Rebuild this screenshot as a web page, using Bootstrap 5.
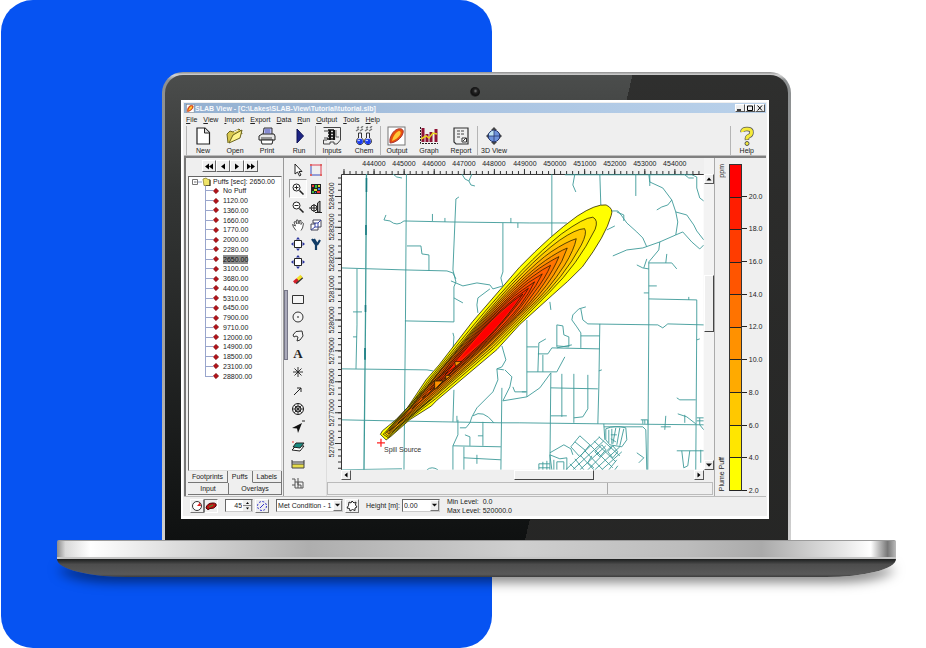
<!DOCTYPE html>
<html lang="en">
<head>
<meta charset="utf-8">
<meta name="viewport" content="width=device-width, initial-scale=1">
<title>SLAB View</title>
<link href="https://cdn.jsdelivr.net/npm/bootstrap@5.3.0/dist/css/bootstrap.min.css" rel="stylesheet">
<style>
:root{--face:#efefef;--edge:#8a8a8a;--ink:#222}
body{background:#fff;font-family:"Liberation Sans",Arial,sans-serif;color:var(--ink)}
.stage{min-height:100vh;padding-top:72px;padding-bottom:70px;overflow:hidden}
.backdrop{position:absolute;top:0;bottom:0;left:1px;width:53%;background:#0653f2;border-radius:32px}
.laptop{position:relative}
.lid{margin:0 14.6% 0 17.5%;padding:3px 3px 0;border-radius:21px 21px 0 0;background:linear-gradient(#8e8e8e,#d5d5d5 3px,#8c8f90 8px,#a3a3a3 60%,#d0d0d0)}
.bezel{border-radius:18px 18px 0 0;padding:0 19px 21px 16px;background:linear-gradient(103deg,transparent 64%,rgba(42,42,41,.85) 64%),linear-gradient(#4b4d4c,#343635 25%,#0f1111)}
.cam-row{height:25px}
.cam{width:10px;height:10px;border-radius:50%;background:radial-gradient(circle at 55% 40%,#777 0,#222 25%,#111 55%,#3a3a3a 75%,#222)}
.base-top{height:19px;margin:0 3.2% 0 6.2%;border-top:1px solid #9a9a9a;border-bottom:2px solid #c9c9c9;border-radius:2px 2px 0 0;background:linear-gradient(90deg,#8b8b8b,#d9d9d9 1%,#fff 4%,#ddd 14%,#aeaeae 30%,#cfcfcf 55%,#bcbcbc 75%,#aaa 84%,#e9e9e9 94%,#fff 97%,#777 99%,#bbb)}
.base-foot{height:18px;margin:0 3.2% 0 6.2%;border-radius:0 0 70px 70px/0 0 18px 18px;background:linear-gradient(#1c1e1e,#4d4d4d 30%,#595959 85%,#3c3c3c);box-shadow:0 7px 12px -2px rgba(0,0,0,.5)}
.screen{background:var(--face);border:2px solid #fff;border-bottom-width:3px;padding:1px;font-size:7px;line-height:9px}
.screen button,.screen input,.screen select{font:inherit;color:inherit;border-radius:0;padding:0;margin:0}
.titlebar{height:10px;background:linear-gradient(90deg,#94b0d0,#a9c3e1 45%,#b9d1ea);color:#f8fafd;font-weight:700;padding:0 1px 0 2px}
.win-btn{width:10px;height:8px;background:var(--face);border:1px solid;border-color:#fff #555 #555 #fff}
.menus{height:13px;padding-left:2px;gap:6px}
.menus a{color:var(--ink);text-decoration:none}
.toolbar{height:30px;padding:0 3px 0 2px;border-bottom:1px solid #bbb}
.tool{width:32px;border:0;background:none}
.tool svg{width:20px;height:20px}
.rule{width:1px;background:#b5b5b5;align-self:stretch}
.work{border-top:2px solid #808080}
.side{width:100px;border-left:2px solid #777;border-right:1px solid #999;padding:2px 1px 1px 2px}
.step{width:14px;height:12px;background:var(--face);border:1px solid;border-color:#fff #666 #666 #fff}
.screen .steps{padding-right:10px}
.tree{background:#fff;border:1px solid #666;border-right-color:#ddd;border-bottom-color:#ddd;padding-left:2px}
.puffs{height:195px;grid-auto-rows:1fr;margin:0 0 0 14px;padding:0}
.puffs li{list-style:none}
.puffs .stem{width:8px;align-self:stretch;border-left:1px solid #99a5cc;background:linear-gradient(#99a5cc,#99a5cc) 0 50%/100% 1px no-repeat}
.puffs li:last-child .stem{border-left:0;background:linear-gradient(#99a5cc,#99a5cc) 0 50%/100% 1px no-repeat,linear-gradient(#99a5cc,#99a5cc) 0 0/1px 50% no-repeat}
.puffs svg{width:6px;height:6px;margin-right:4px}
.puffs .picked{background:#8c8c8c;color:#111}
.tabkey{height:12px;background:var(--face);border:solid #777;border-width:0 1px 1px 0;flex:1 1 auto}
.tabkey.open{border-color:#efefef #777 #efefef #efefef}
.split{width:5px}
.split i{height:70px;width:4px;background:#aab;border:1px solid #778;margin-top:132px}
.palette{width:38px;grid-template-columns:18px 18px;grid-template-rows:repeat(18,1fr);padding:3px 0 4px;border-right:1px solid #ddd}
.palette button{border:0;background:none;display:flex;align-items:center;justify-content:center}
.palette button.held{border:1px solid;border-color:#999 #fff #fff #999;background:#f7f7f7}
.palette svg{width:14px;height:14px}
.screen .palette .letter{font-family:"Liberation Serif",serif;font-size:13px;font-weight:700}
.plot{min-width:0}
.chart{display:block;width:100%;height:auto}
.vbar{width:10px;padding-top:16px;background:#f3f3f3}
.vtrack{padding:91px 0 128px}
.htrack{padding:0 10px 0 14px}
.hthumb{margin-left:47.4%;width:23.6%}
.scroll-key{width:10px;height:10px;background:var(--face);border:1px solid;border-color:#fff #555 #555 #fff;line-height:1}
.thumb{background:var(--face);border:1px solid;border-color:#fff #444 #444 #fff}
.state{height:13px;border:1px solid #bbb;margin:2px 1px 1px 0}
.state span{width:73%;border-right:1px solid #aaa}
.legend{width:52px;border-left:1px solid #aaa;padding:6px 0 5px 2px}
.upright{writing-mode:vertical-rl;transform:rotate(180deg)}
.keys{margin-left:3px;border:1px solid #333;border-bottom:0;width:13px}
.keys span{border-bottom:1px solid #222}
.marks span{margin-bottom:-4px;margin-top:4px}
.marks span::before{content:"";width:5px;height:1px;background:#222;margin:0 2px 4px 0}
.footbar{height:19px;border-top:1px solid #bbb;padding-left:6px}
.footbar .gap-l{margin-left:7px}
.footbar .gap-s{margin-left:2px}
.mini{width:14px;height:14px;background:var(--face);border:1px solid!important;border-color:#fff #777 #777 #fff!important}
.mini.held{border-color:#777 #fff #fff #777!important}
.mini svg{width:12px;height:12px;display:block}
.field{height:13px;background:#fff;border:1px solid;border-color:#666 #ccc #ccc #666}
.screen .field select,.screen .field input{appearance:none;border:0;background:none;outline:0;padding:0 1px;min-width:0}
.drop{width:9px;background:var(--face);border:1px solid;border-color:#fff #777 #777 #fff;pointer-events:none;margin-left:-9px}
.w-num{width:28px}.w-met{width:67px}.w-hgt{width:38px}
</style>
</head>
<body>
<svg width="0" height="0" class="position-absolute" aria-hidden="true">
<symbol id="flame" viewBox="0 0 20 20"><rect x="1" y="1" width="17" height="18" fill="#fff" stroke="#777"/><path d="M3 16C2 12 6 4 11 3C15 2 17 4 16 7C15 12 8 17 3 17Z" fill="#e8500c" stroke="#a33"/><path d="M5 15C6 10 9 6 12 5C14 5 14 7 13 9C11 12 8 14 5 15Z" fill="#ffc93a"/></symbol>
<symbol id="tri" viewBox="0 0 8 8"><path d="M1 2.500H7L4 5.800Z" fill="#111"/></symbol>
<symbol id="gem" viewBox="0 0 6 6"><path d="M3 .3L5.700 3L3 5.700L.3 3Z" fill="#b3131b" stroke="#600" stroke-width=".5"/></symbol>
</svg>
<main class="stage position-relative">
<div class="backdrop"></div>
<div class="laptop">
<div class="lid"><div class="bezel">
<div class="cam-row d-flex justify-content-center align-items-center"><div class="cam mt-2"></div></div>
<section class="screen">
<header class="titlebar d-flex align-items-center">
<svg width="9" height="9"><use href="#flame"/></svg><span class="me-auto text-nowrap">SLAB View - [C:\Lakes\SLAB-View\Tutorial\tutorial.slb]</span>
<button class="win-btn d-flex" aria-label="Minimize"><svg width="8" height="6"><path d="M1 5H5" stroke="#000" stroke-width="1.500"/></svg></button>
<button class="win-btn d-flex" aria-label="Restore"><svg width="8" height="6"><path d="M1.500 1H6.500V5.500H1.500Z" fill="none" stroke="#000"/></svg></button>
<button class="win-btn d-flex" aria-label="Close"><svg width="8" height="6"><path d="M1.500 .5L6 5.500M6 .5L1.500 5.500" stroke="#000"/></svg></button>
</header>
<nav class="menus d-flex align-items-center">
<a href="#"><u>F</u>ile</a><a href="#"><u>V</u>iew</a><a href="#"><u>I</u>mport</a><a href="#"><u>E</u>xport</a><a href="#"><u>D</u>ata</a><a href="#"><u>R</u>un</a><a href="#"><u>O</u>utput</a><a href="#"><u>T</u>ools</a><a href="#"><u>H</u>elp</a>
</nav>
<div class="toolbar d-flex">
<span class="rule"></span>
<button class="tool"><svg viewBox="0 0 20 20"><path d="M4 2H12L16.500 6.500V18H4Z" fill="#fff" stroke="#222" stroke-width="1.200"/><path d="M11.500 2V7H16.500" fill="#ddd" stroke="#222"/></svg><br>New</button>
<button class="tool"><svg viewBox="0 0 20 20"><path d="M3 17L2 8L5 5L8 6L14 3L16 5L17 8" fill="#d9c94e" stroke="#6c6420"/><path d="M4 17L8 9L17 4L15 12Z" fill="#fdf48c" stroke="#6c6420"/><path d="M9 6L13 4" stroke="#fff"/></svg><br>Open</button>
<button class="tool"><svg viewBox="0 0 20 20"><path d="M6 9L7 2H15L15 9" fill="#b9bdf2" stroke="#333"/><path d="M8 4H13M8 6H13" stroke="#5258b0"/><path d="M2 10L5 8H17L18 10V14H2Z" fill="#e7e7e7" stroke="#222"/><path d="M4 14H16L15 18H5Z" fill="#fff" stroke="#222"/><path d="M4 12H15" stroke="#444"/></svg><br>Print</button>
<button class="tool"><svg viewBox="0 0 20 20"><path d="M8 3L14.500 10L8 17Z" fill="#1d2485" stroke="#0c1155"/></svg><br>Run</button>
<span class="rule"></span>
<button class="tool"><svg viewBox="0 0 20 20"><path d="M1.500 1.500H18.500V14L15 18H12V16H8V18H1.500V14H5" fill="#eee" stroke="#444"/><path d="M2 5H8M2 12H6" stroke="#444"/><path d="M6 4H12M6 7H11M6 10H11M5 13H11" stroke="#111" stroke-width="1.600"/><path d="M8 4V14M12 4V14" stroke="#111" stroke-width="2.200"/><path d="M14 4V11H17" fill="none" stroke="#666"/></svg><br>Inputs</button>
<button class="tool"><svg viewBox="0 0 20 20"><g fill="none" stroke="#777"><path d="M3 2L5 1M7 2L9 0M2 5L5 3M6 5L9 3M12 2L14 1M16 2L18 0M11 5L14 3M15 5L18 3" stroke-width="1.400"/></g><g fill="#eef" stroke="#333"><path d="M4.500 7V12A3.500 3.500 0 1 0 7.500 12V7ZM12.500 7V12A3.500 3.500 0 1 0 15.500 12V7Z"/></g><circle cx="6" cy="15.500" r="2.800" fill="#1b3cf0"/><circle cx="14" cy="15.500" r="2.800" fill="#1b3cf0"/><circle cx="5" cy="14.500" r=".8" fill="#fff"/><circle cx="13" cy="14.500" r=".8" fill="#fff"/></svg><br>Chem</button>
<span class="rule"></span>
<button class="tool"><svg><use href="#flame"/></svg><br>Output</button>
<button class="tool"><svg viewBox="0 0 20 20"><path d="M1.500 1V17.500H19" fill="none" stroke="#222" stroke-dasharray="2 1"/><path d="M4 2V16M8 8V16M12 6V16M17 3V16" stroke="#8f1235" stroke-width="3"/><path d="M2 13L7 10L10 12L14 7L18 8" fill="none" stroke="#e8d51c" stroke-width="1.500"/></svg><br>Graph</button>
<button class="tool"><svg viewBox="0 0 20 20"><path d="M3 2H17V18H5L3 16Z" fill="#eee" stroke="#333" stroke-width="1.200"/><path d="M6 5H14M6 8H13M6 11H10" stroke="#444" stroke-dasharray="3 1"/><path d="M11 12H15.500V16H11ZM12 15L15 12" fill="#fff" stroke="#333"/></svg><br>Report</button>
<span class="rule"></span>
<button class="tool"><svg viewBox="0 0 20 20"><path d="M10 1L13 4H7ZM10 19L13 16H7ZM2 10L5 7V13ZM18 10L15 7V13Z" fill="#444"/><circle cx="10" cy="10" r="5.800" fill="#6f93dc" stroke="#26386e"/><path d="M5 8Q7 4.500 10 4.500V10H5Z" fill="#bfe3f2"/><path d="M10 4V16M4 10H16" stroke="#26386e" stroke-width=".8"/></svg><br><span class="text-nowrap">3D View</span></button>
<span class="rule ms-auto"></span>
<button class="tool"><svg viewBox="0 0 20 20"><path d="M5.500 6Q5 3 10 3T14.500 6.500Q14.500 9 12 10T10 14" fill="none" stroke="#555" stroke-width="4.500"/><path d="M5.500 6Q5 3 10 3T14.500 6.500Q14.500 9 12 10T10 13.500" fill="none" stroke="#f5ea3a" stroke-width="3"/><circle cx="10" cy="17.500" r="2" fill="#f5ea3a" stroke="#555"/></svg><br>Help</button>
</div>
<div class="work d-flex">
<aside class="side d-flex flex-column">
<div class="steps d-flex justify-content-center mb-1">
<button class="step d-flex align-items-center justify-content-center" aria-label="First"><svg width="10" height="7"><path d="M5 .5V6.500L1 3.500ZM9 .5V6.500L5 3.500Z"/></svg></button>
<button class="step d-flex align-items-center justify-content-center" aria-label="Previous"><svg width="10" height="7"><path d="M7 .5V6.500L3 3.500Z"/></svg></button>
<button class="step d-flex align-items-center justify-content-center" aria-label="Next"><svg width="10" height="7"><path d="M3 .5V6.500L7 3.500Z"/></svg></button>
<button class="step d-flex align-items-center justify-content-center" aria-label="Last"><svg width="10" height="7"><path d="M1 .5V6.500L5 3.500ZM5 .5V6.500L9 3.500Z"/></svg></button>
</div>
<div class="tree flex-grow-1">
<div class="d-flex align-items-center text-nowrap"><svg width="22" height="9" class="flex-shrink-0"><path d="M1.500 2.500H6.500V7.500H1.500ZM3 5H5.500" fill="#fff" stroke="#777"/><path d="M7 5H11" stroke="#99a5cc"/><path d="M12 2L15 1L17 2.500H19V8.500H13Z" fill="#efe469" stroke="#8d8430" stroke-width=".8"/><path d="M19 3V9H15" stroke="#222" fill="none"/></svg>Puffs [sec]: 2650.00</div>
<ul class="puffs d-grid">
<li class="d-flex align-items-center"><span class="stem"></span><svg><use href="#gem"/></svg>No Puff</li>
<li class="d-flex align-items-center"><span class="stem"></span><svg><use href="#gem"/></svg>1120.00</li>
<li class="d-flex align-items-center"><span class="stem"></span><svg><use href="#gem"/></svg>1360.00</li>
<li class="d-flex align-items-center"><span class="stem"></span><svg><use href="#gem"/></svg>1660.00</li>
<li class="d-flex align-items-center"><span class="stem"></span><svg><use href="#gem"/></svg>1770.00</li>
<li class="d-flex align-items-center"><span class="stem"></span><svg><use href="#gem"/></svg>2000.00</li>
<li class="d-flex align-items-center"><span class="stem"></span><svg><use href="#gem"/></svg>2280.00</li>
<li class="d-flex align-items-center"><span class="stem"></span><svg><use href="#gem"/></svg><span class="picked">2650.00</span></li>
<li class="d-flex align-items-center"><span class="stem"></span><svg><use href="#gem"/></svg>3100.00</li>
<li class="d-flex align-items-center"><span class="stem"></span><svg><use href="#gem"/></svg>3680.00</li>
<li class="d-flex align-items-center"><span class="stem"></span><svg><use href="#gem"/></svg>4400.00</li>
<li class="d-flex align-items-center"><span class="stem"></span><svg><use href="#gem"/></svg>5310.00</li>
<li class="d-flex align-items-center"><span class="stem"></span><svg><use href="#gem"/></svg>6450.00</li>
<li class="d-flex align-items-center"><span class="stem"></span><svg><use href="#gem"/></svg>7900.00</li>
<li class="d-flex align-items-center"><span class="stem"></span><svg><use href="#gem"/></svg>9710.00</li>
<li class="d-flex align-items-center"><span class="stem"></span><svg><use href="#gem"/></svg>12000.00</li>
<li class="d-flex align-items-center"><span class="stem"></span><svg><use href="#gem"/></svg>14900.00</li>
<li class="d-flex align-items-center"><span class="stem"></span><svg><use href="#gem"/></svg>18500.00</li>
<li class="d-flex align-items-center"><span class="stem"></span><svg><use href="#gem"/></svg>23100.00</li>
<li class="d-flex align-items-center"><span class="stem"></span><svg><use href="#gem"/></svg>28800.00</li>
</ul>
</div>
<div class="d-flex"><button class="tabkey">Footprints</button><button class="tabkey open">Puffs</button><button class="tabkey">Labels</button></div>
<div class="d-flex"><button class="tabkey">Input</button><button class="tabkey">Overlays</button></div>
</aside>
<div class="split"><i class="d-block"></i></div>
<div class="palette d-grid">
<button aria-label="Select"><svg viewBox="0 0 14 14"><path d="M4 1V11L6.500 9L8.500 13L10 12L8 8.500H11Z" fill="#fff" stroke="#222"/></svg></button>
<button aria-label="Area"><svg viewBox="0 0 14 14"><path d="M2 2H12V12" fill="none" stroke="#e23a4c"/><path d="M2 2V12H12" fill="none" stroke="#3a4fc0"/><path d="M1 1h2v2h-2zM11 1h2v2h-2zM1 11h2v2h-2zM11 11h2v2h-2z" fill="#d66"/></svg></button>
<button class="held" aria-label="Zoom in"><svg viewBox="0 0 14 14"><circle cx="5.500" cy="5.500" r="3.500" fill="#fff" stroke="#222"/><path d="M3.500 5.500H7.500M5.500 3.500V7.500" stroke="#222"/><path d="M8.500 8.500L12.500 12.500" stroke="#222" stroke-width="1.600"/></svg></button>
<button aria-label="Colors"><svg viewBox="0 0 14 14"><path d="M2 2H12V12H2Z" fill="#222"/><path d="M3 3h2v2h-2zM8 9h3v2h-3z" fill="#e33"/><path d="M6 3h2v3h-2zM3 9h2v2h-2z" fill="#3b4"/><path d="M9 3h2v2h-2zM5 7h3v2h-3z" fill="#dd3"/><path d="M9 6h2v2h-2zM6 10h1v1h-1z" fill="#37e"/></svg></button>
<button aria-label="Zoom out"><svg viewBox="0 0 14 14"><circle cx="5.500" cy="5.500" r="3.500" fill="#fff" stroke="#222"/><path d="M3.500 5.500H7.500" stroke="#222"/><path d="M8.500 8.500L12.500 12.500" stroke="#222" stroke-width="1.600"/></svg></button>
<button aria-label="Building"><svg viewBox="0 0 14 14"><path d="M8.500 3L11 1V12H8.500Z" fill="#aaa" stroke="#222"/><path d="M6 12.500H13" stroke="#222"/><circle cx="5" cy="8" r="3" fill="none" stroke="#222"/><path d="M0 8H9M5 4V12" stroke="#222"/></svg></button>
<button aria-label="Pan"><svg viewBox="0 0 14 14"><path d="M5 12.500L2.500 9L1.500 6.500L4.500 8L3 4L4.500 3.500L6 6L5.500 2H7L8 6L8.500 2.500H10L10 6.500L11.500 4.500L12.500 5.500L11.500 10L10 12.500" fill="#fff" stroke="#444" stroke-width=".9"/></svg></button>
<button aria-label="Extent"><svg viewBox="0 0 14 14"><path d="M4 2H12V9H9V12H2V6H6V5H4Z" fill="#fff" stroke="#445"/><path d="M6 5H9V9H6ZM2 12L6 9M9 5L12 2" fill="none" stroke="#3946a5"/></svg></button>
<button aria-label="Fit"><svg viewBox="0 0 14 14"><path d="M3.500 3.500H10.500V10.500H3.500Z" fill="#fff" stroke="#222"/><path d="M7 0L9 2.500H5ZM7 14L9 11.500H5ZM0 7L2.500 5V9ZM14 7L11.500 5V9Z" fill="#26309c"/></svg></button>
<button aria-label="Wind"><svg viewBox="0 0 14 14"><path d="M3 2L7 8V13M5 2L8 7M8 8L11 3" stroke="#123c66" stroke-width="2.200" fill="none"/></svg></button>
<button aria-label="Fit layer"><svg viewBox="0 0 14 14"><path d="M3.500 3.500H10.500V10.500H3.500Z" fill="#fff" stroke="#222"/><path d="M7 0L9 2.500H5ZM7 14L9 11.500H5ZM0 7L2.500 5V9ZM14 7L11.500 5V9Z" fill="#26309c"/></svg></button><span></span>
<button aria-label="Highlight"><svg viewBox="0 0 14 14"><path d="M4.500 10L11 4" stroke="#333" stroke-width="3.500"/><path d="M6.500 6.500L10.500 3" stroke="#f3e02a" stroke-width="3"/><path d="M3 9.500L6.500 6.500" stroke="#d4202a" stroke-width="3"/></svg></button><span></span>
<button aria-label="Rectangle"><svg viewBox="0 0 14 14"><path d="M1.500 3.500H12.500V11.500H1.500Z" fill="#f5f5f5" stroke="#333"/></svg></button><span></span>
<button aria-label="Circle"><svg viewBox="0 0 14 14"><circle cx="7" cy="7" r="5" fill="#f5f5f5" stroke="#333"/><circle cx="7" cy="7" r=".8"/></svg></button><span></span>
<button aria-label="Polygon"><svg viewBox="0 0 14 14"><path d="M2 6L5 2.500L11 2L12 7L9 11L6 12L7 8L5 7L3 8Z" fill="#f5f5f5" stroke="#333"/></svg></button><span></span>
<button class="letter" aria-label="Text">A</button><span></span>
<button aria-label="Marker"><svg viewBox="0 0 14 14"><path d="M7 2V12M2 7H12M3.500 3.500L10.500 10.500M10.500 3.500L3.500 10.500" stroke="#222" stroke-width=".9"/></svg></button><span></span>
<button aria-label="Arrow"><svg viewBox="0 0 14 14"><path d="M3 11L10 4M6 4H10V8" stroke="#222" fill="none"/></svg></button><span></span>
<button aria-label="Polar grid"><svg viewBox="0 0 14 14"><circle cx="7" cy="7" r="5.500" fill="none" stroke="#222"/><circle cx="7" cy="7" r="3" fill="none" stroke="#222"/><path d="M7 1V13M1 7H13M3 3L11 11M11 3L3 11" stroke="#222" stroke-width=".8"/></svg></button><span></span>
<button aria-label="North"><svg viewBox="0 0 14 14"><path d="M11 3L7 13L6 8.500L1 8Z" fill="#111"/><path d="M11 1H14" stroke="#222"/></svg></button><span></span>
<button aria-label="Layers"><svg viewBox="0 0 14 14"><path d="M1 11L5 7H13L9 12Z" fill="#fff" stroke="#222"/><path d="M2 8L5 4H13L9 9Z" fill="#1b8a80" stroke="#222"/><path d="M1 3H3" stroke="#e33"/></svg></button><span></span>
<button aria-label="Scale"><svg viewBox="0 0 14 14"><path d="M1 3V7M1 5H13M13 3V7" stroke="#333"/><path d="M1 7H13V11H1Z" fill="#e6dc4a" stroke="#444"/></svg></button><span></span>
<button aria-label="Coordinates"><svg viewBox="0 0 14 14"><path d="M1 3H4V12M4 6H12V12H4M7 2V9H10V12M7 6V12M1 9H4" stroke="#555" fill="none"/></svg></button><span></span>
</div>
<div class="plot flex-grow-1 d-flex flex-column">
<div class="d-flex">
<svg class="chart" viewBox="327 158 377 312" role="img" aria-label="Plume map">
<defs><clipPath id="mapclip"><path d="M341 174H704V470H341Z"/></clipPath></defs>
<path d="M341 174H704V470H341Z" fill="#fff"/>
<g stroke="#333" fill="none">
<path d="M343.500 172.500H704" stroke-width="3" stroke-dasharray="1 5.020"/><path d="M343.500 171.500H704" stroke-width="5" stroke-dasharray="1 29.100"/>
<path d="M339.500 177.500V470" stroke-width="3" stroke-dasharray="1 5.180"/><path d="M338 196V470" stroke-width="6" stroke-dasharray="1 29.900"/>
<path d="M341.500 470V174.500H704"/></g>
<g font-size="7" fill="#222" text-anchor="middle"><text x="374" y="166">444000</text><text x="404" y="166">445000</text><text x="434" y="166">446000</text><text x="464" y="166">447000</text><text x="494" y="166">448000</text><text x="525" y="166">449000</text><text x="555" y="166">450000</text><text x="585" y="166">451000</text><text x="615" y="166">452000</text><text x="645" y="166">453000</text><text x="675" y="166">454000</text>
<text transform="translate(334 196) rotate(-90)">5284000</text><text transform="translate(334 227) rotate(-90)">5283000</text><text transform="translate(334 258) rotate(-90)">5282000</text><text transform="translate(334 289) rotate(-90)">5281000</text><text transform="translate(334 320) rotate(-90)">5280000</text><text transform="translate(334 351) rotate(-90)">5279000</text><text transform="translate(334 382) rotate(-90)">5278000</text><text transform="translate(334 413) rotate(-90)">5277000</text><text transform="translate(334 444) rotate(-90)">5276000</text></g>
<g clip-path="url(#mapclip)">
<g fill="none" stroke="#3d9a98" stroke-width=".9" stroke-linejoin="round">
<path d="M366.500 174L365.500 320L364 470" stroke-width="1.300"/><path d="M366.500 178V192M366 225V235M365.500 305V312M365 348V360" stroke="#177a80" stroke-width="1.600"/>
<path d="M406.500 174L405.500 320L404 470M393 174Q396 178 402 178M462 174L465 179L469 181L471 185L475 186M472 174L469 181M459 197L456 199L455 222L453 270L456 282L454 287V322L405 321"/>
<path d="M386 215L384 220L390 221Q397 227 404 221L450 222L530 223H567M432.500 214V221M445 218V222M511 218V223M518 223V228M407 246H421L422 254L429 255V271"/>
<path d="M342 268L405 270L447 271L453 273L456 279M451 281L463 286L477 283L490 285L493 289L503 286M503 223V272L501 278L503 286M490 289L478 298L477 305L478 313M454 298L463 303M357 269V325L356 369M353 312H362M353 337H357M342 369L427 370L433 371"/>
<path d="M342 420L390 421L443 422L502 423L520 423L600 424L704 425M453 333L454 337L453 352M454 390L453 422M457 416V422M502 346L506 360L502 367L497 369L498 380L493 392L477 408L472 417L470 423L466 428L460 428M473 416Q483 409 494 423"/>
<path d="M497 369L504 370M505 370L512 377L510 387L503 401L527 397M502 388L501 470M458 420V435L453 446V470M453 446L501 447M483 422V446M464 447V470M464 458L501 460M477 455V464M465 435L470 437V446M478 436H483M427 470Q432 466 438 470M527 320V397M513 387L515 392H526M342 470L402 469M527 392H522"/>
<path d="M552 174V236M600 174L601 205M575 174L573 185L576 192M636 174V196M649 174L650 182L663 188L672 200L676 212L678 222L676 235L660 242L643 248L627 250L613 256M650 175V186M565 174.800H692L697 177L697 188L700 198L704 201M684 174L689 178H694M672 200L668 205L662 207L657 210"/>
<path d="M676 212L687 215L694 225L697 231L704 240M676 235L683 232L692 242L700 249L704 245M612 211H618L622 216L627 223L637 232L643 238L647 247M617 212L624 215V221M615 226L607 230M660 242L659 250L649 262V325L648 470M649 263L672 263L677 269M666 263L667 254M637 265L643 268L649 269M644 268L647 259M649 286H657M644 293H649M649 299L697 300V325L696 470M689 297V300"/>
<path d="M586 307L579 309L573 315L572 320L577 327L581 333V348M581 309L583 320L588 324L658 325L663 328L668 324L704 325M550 302L551 310M581 336H600M600 324L599 387L598 424M527 347H538M546 339L539 343L538 372M557 347V325L563 326L564 335L569 337V347L557 346M538 354H548L552 348L600 349M527 372H557L558 370L565 357M543 355V372M572 345L557 348"/>
<path d="M527 397L540 388L551 373L550 470M551 388L598 389M562 374V417M551 416H567M574 374V423M588 375V409L583 417L574 418M604 424L605 440M604 427H643L646 430L647 470M677 398L680 400L696 400M666 416L665 430M661 427H671M678 414L687 417L696 424M685 415V423M677 451H704M682 451L684 468L688 466L690 451M701 450V463M637 453L644 458L639 463M697 340L700 339M599 371L602 370M641 420H648V424M643 420V424M645 420V424M697 418H704M697 421H704M700 418V425L704 430"/>
<path d="M550 453L564 445L571 449L573 455M552 470L550 455L560 459L567 458V470M554 470V460M557 470V462H564V470M539 464H550M539 468H550M539 464V470M543 462V470M547 461V470M571 447L580 436L590 445L580 457L571 447M575 442L586 451M566 470L600 437M573 470L604 441M580 470L606 446M588 470L612 446M595 470L620 447M602 470L622 452M609 470L617 460M585 451L603 470M590 445L613 468M594 441L616 462M599 437L620 456M575 459L584 470M570 464L576 470M580 455L594 470M606 429Q615 425 626 428L627 440L622 447L610 445L606 440ZM609 430V443M612 429V444M616 428L613 444M620 428L617 445M624 429L620 446M611 435H617M611 439L616 442M602 445L606 450L600 457L595 452ZM613 446L618 452L613 458L608 452ZM592 456L588 463L594 468M618 466L615 470"/>
</g>
<g transform="translate(384 438) rotate(-46)" stroke="#1f1a00" stroke-width=".7" stroke-linejoin="round">
<path fill="#ff0" d="M0 -5L4 -6Q22 -3 38 -4L71 -10L91 -11L145 -17L217 -21Q262 -21 294 -15Q316 -10 322 -2Q325 6 318 9Q300 19 261 24Q240 24 220 22L176 19L142 20L64 12L56 12L31 6L6 4L0 3Z"/>
<path fill="#ffe600" d="M2 -3L38 -3L71 -8L145 -14Q225 -20 270 -14Q298 -9 304 -3Q306 3 297 7Q260 19 220 18L142 17L64 10L31 5L3 3Z"/>
<path fill="#ffc800" d="M4 -2L38 -2L75 -7L145 -12Q225 -18 264 -11Q284 -7 290 -1Q289 4 276 8Q240 18 200 16L142 15L64 8L31 4L4 2Z"/>
<path fill="#ffaa00" d="M6 -2L40 -2L80 -6L145 -11Q220 -15 250 -9Q268 -5 277 0Q268 6 250 10Q220 16 190 14L142 13L64 7L31 3L6 1Z"/>
<path fill="#ff9100" d="M8 -1L45 -2L85 -6L145 -10Q210 -13 240 -7Q255 -4 264 0Q252 6 235 9Q210 14 180 12L142 12L70 6L31 2Z"/>
<path fill="#ff7300" d="M20 0L50 -2L90 -6L145 -9Q205 -11 230 -6Q244 -3 252 0Q240 5 222 8Q200 12 180 11L142 10L75 5Z"/>
<path fill="#ff5f00" d="M40 0L95 -5L145 -8Q198 -9 220 -5Q232 -3 240 0Q228 5 210 7Q190 11 170 10L142 9L80 4Z"/>
<path fill="#ff5000" d="M55 0L98 -4L145 -7Q190 -8 212 -4L228 0Q216 4 200 6Q180 10 142 8L85 4Z"/>
<path fill="#ff3c00" d="M66 0L100 -4L145 -6Q185 -7 203 -3L217 0Q205 4 190 6Q170 8 142 7L90 3Z"/>
<path fill="#ff2d00" d="M76 0L104 -3L145 -5Q180 -6 208 0Q190 5 142 6L95 3Z"/>
<path fill="#ff1e00" d="M88 0L108 -2L145 -4Q175 -5 200 0Q175 5 142 5L100 2Z"/>
<path fill="#f00" stroke="none" d="M108 0L145 -3Q170 -4 193 0Q170 4 142 4Z"/>
<path fill="none" d="M6 0L60 1M10 -3L60 -5M10 2L60 7M60 2L92 0M70 -4L100 -1M72 4L105 2"/>
<path fill="#ff9100" d="M76 -3L82 3L70 3ZM88 1L91 5L85 4ZM104 -2L109 3L101 2Z"/>
</g>
<path d="M377 443H385M381 439V447" stroke="#f22" stroke-width="1.300"/><text x="384" y="452" font-size="7" fill="#333">Spill Source</text>
</g>
</svg>
<div class="vbar d-flex flex-column flex-shrink-0"><button class="scroll-key d-flex" aria-label="Scroll up"><svg width="8" height="8"><path d="M1.500 5.500H6.500L4 2.500Z"/></svg></button><div class="vtrack flex-grow-1 d-flex flex-column"><i class="thumb flex-grow-1"></i></div><button class="scroll-key d-flex" aria-label="Scroll down"><svg width="8" height="8"><use href="#tri"/></svg></button></div>
</div>
<div class="htrack d-flex"><button class="scroll-key d-flex" aria-label="Scroll left"><svg width="8" height="8"><path d="M5.500 1.500V6.500L2.500 4Z"/></svg></button><div class="flex-grow-1 d-flex"><i class="thumb hthumb"></i></div><button class="scroll-key d-flex" aria-label="Scroll right"><svg width="8" height="8"><path d="M2.500 1.500V6.500L5.500 4Z"/></svg></button></div>
<div class="state d-flex"><span></span></div>
</div>
<aside class="legend d-flex">
<div class="d-flex flex-column justify-content-between"><span class="upright">ppm</span><span class="upright text-nowrap">Plume Puff</span></div>
<div class="keys d-flex flex-column flex-shrink-0">
<span class="flex-fill" style="background:#f00"></span><span class="flex-fill" style="background:#ff1e00"></span><span class="flex-fill" style="background:#ff3c00"></span><span class="flex-fill" style="background:#ff5500"></span><span class="flex-fill" style="background:#ff7300"></span><span class="flex-fill" style="background:#ff9100"></span><span class="flex-fill" style="background:#ffaa00"></span><span class="flex-fill" style="background:#ffc800"></span><span class="flex-fill" style="background:#ffe600"></span><span class="flex-fill" style="background:#ff0"></span>
</div>
<div class="marks d-flex flex-column">
<span class="flex-fill d-flex align-items-end">20.0</span><span class="flex-fill d-flex align-items-end">18.0</span><span class="flex-fill d-flex align-items-end">16.0</span><span class="flex-fill d-flex align-items-end">14.0</span><span class="flex-fill d-flex align-items-end">12.0</span><span class="flex-fill d-flex align-items-end">10.0</span><span class="flex-fill d-flex align-items-end">8.0</span><span class="flex-fill d-flex align-items-end">6.0</span><span class="flex-fill d-flex align-items-end">4.0</span><span class="flex-fill d-flex align-items-end">2.0</span>
</div>
</aside>
</div>
<footer class="footbar d-flex align-items-center text-nowrap">
<button class="mini" aria-label="Time"><svg viewBox="0 0 12 12"><circle cx="6" cy="6" r="4.500" fill="#fff" stroke="#333"/><path d="M6 6L9 2.500L10 6Z" fill="#e02020"/></svg></button>
<button class="mini held" aria-label="Plume"><svg viewBox="0 0 12 12"><path d="M1 8Q2 3 8 3Q12 3 11 6Q9 9 5 8.500Q3 11 1 8Z" fill="#c01515" stroke="#400"/><path d="M4 7L8 5" stroke="#3a3"/></svg></button>
<span class="field w-num gap-l d-flex"><input class="flex-grow-1 w-50 text-end" type="text" value="45" aria-label="Angle"><svg width="9" height="11" class="flex-shrink-0"><path d="M0 0H9V11H0Z" fill="#efefef"/><path d="M3 4L4.500 2L6 4ZM3 7.500H6L4.500 9.500Z"/><path d="M0 5.500H9M8.500 0V11" stroke="#888"/></svg></span>
<button class="mini gap-s flex-shrink-0" aria-label="Rotate"><svg viewBox="0 0 12 12"><circle cx="6" cy="6" r="4.500" fill="none" stroke="#33c" stroke-dasharray="2 1.500"/><path d="M4 8L8 4" stroke="#33c"/></svg></button>
<span class="field w-met gap-l d-flex"><select class="w-100" aria-label="Met condition"><option>Met Condition - 1</option></select><span class="drop d-flex"><svg width="7" height="9"><use href="#tri" width="7" height="8"/></svg></span></span>
<button class="mini gap-s flex-shrink-0" aria-label="Settings"><svg viewBox="0 0 12 12"><path d="M3 2L5 3L6 1L8 3L10 2L9.500 5L11 7L9 8L9 10.500L6.500 9.500L4 11L3.500 8.500L1 8L2.500 5.500Z" fill="#fff" stroke="#222"/></svg></button>
<label for="hgt" class="gap-l">Height [m]:</label>
<span class="field w-hgt gap-s d-flex"><select id="hgt" class="w-100"><option>0.00</option></select><span class="drop d-flex"><svg width="7" height="9"><use href="#tri" width="7" height="8"/></svg></span></span>
<div class="gap-l">Min Level:&nbsp; 0.0<br>Max Level: 520000.0</div>
</footer>
</section>
</div></div>
<div class="base-top"></div>
<div class="base-foot"></div>
</div>
</main>
<script src="https://cdn.jsdelivr.net/npm/bootstrap@5.3.0/dist/js/bootstrap.bundle.min.js"></script>
</body>
</html>
